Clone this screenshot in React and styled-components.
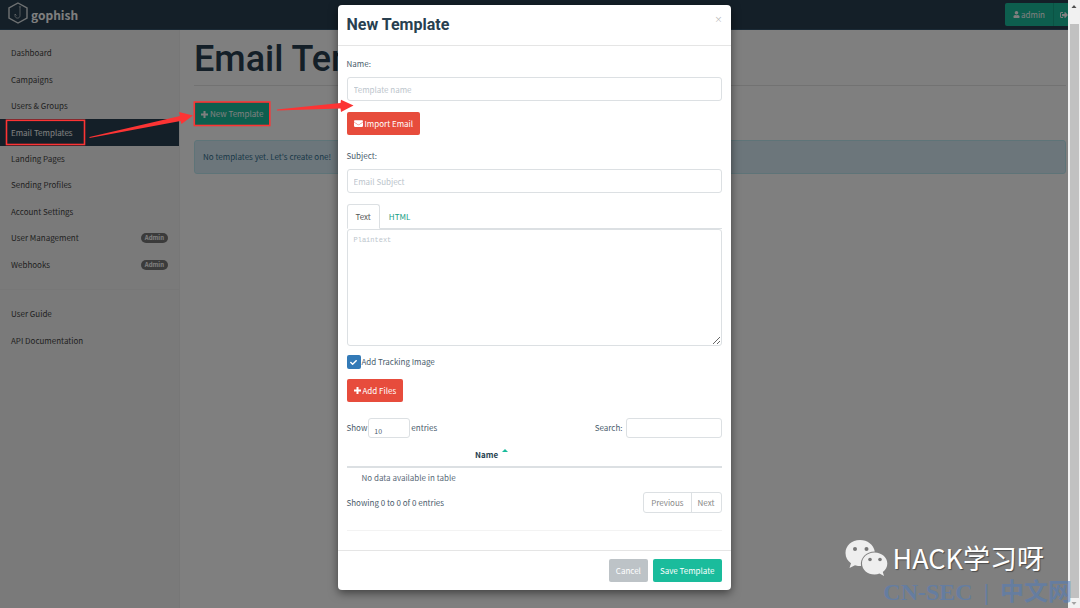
import React from "react";
import styled, { createGlobalStyle } from "styled-components";
import { FaPlus, FaEnvelope, FaUser, FaSignOutAlt, FaCheck } from "react-icons/fa";

const sans = '"Noto Sans CJK SC", "Noto Sans", sans-serif';
const heading = 'Roboto, "Liberation Sans", sans-serif';
const line = "#dce0e3";

const GlobalStyle = createGlobalStyle`
  *, *::before, *::after { box-sizing: border-box; }
  html, body { margin: 0; height: 100%; overflow: hidden; }
  #root { height: 100%; }
  body { font: 8px/12px ${sans}; color: #4a5c6c; background: #fff; }
  button, input, select, textarea { font: inherit; color: inherit; margin: 0; }
  h1, h2, p, ul { margin: 0; padding: 0; }
`;

const Window = styled.div`
  position: relative;
  display: flex;
  height: 100vh;
`;

const Viewport = styled.div`
  position: relative;
  flex: 1;
  min-width: 0;
  display: flex;
  flex-direction: column;
  overflow: hidden;
`;

const Header = styled.header`
  display: flex;
  align-items: center;
  justify-content: space-between;
  height: 30px;
  padding-left: 8px;
  background: #283f50;
  border-bottom: 1px solid #34526a;
`;

const Brand = styled.a`
  display: flex;
  align-items: center;
  gap: 3px;
  color: #fff;
  font-size: 12px;
  line-height: 16px;
  font-weight: 700;
  text-decoration: none;

  svg { flex: none; margin-top: -3px; }
`;

const HeaderButtons = styled.div`
  display: flex;
`;

const HeaderButton = styled.button`
  display: flex;
  align-items: center;
  gap: 1px;
  height: 23px;
  padding: 0 ${(p) => (p.$clipped ? 0 : 8)}px 0 ${(p) => (p.$clipped ? 6 : 8)}px;
  width: ${(p) => (p.$clipped ? "15px" : "auto")};
  overflow: hidden;
  border: 0;
  border-left: ${(p) => (p.$clipped ? "1px solid #17a689" : "0")};
  border-radius: ${(p) => (p.$clipped ? "0" : "2px 0 0 2px")};
  background: #1abc9c;
  color: #fff;

  svg { flex: none; }
`;

const Columns = styled.div`
  flex: 1;
  display: flex;
`;

const Sidebar = styled.nav`
  flex: none;
  width: 180px;
  padding-top: 10px;
  background: #f5f5f5;
  border-right: 1px solid #eee;
`;

const NavList = styled.ul`
  display: grid;
  grid-auto-rows: 1fr;
  height: ${(p) => p.$height}px;
  list-style: none;
`;

const NavLink = styled.a`
  display: flex;
  align-items: center;
  justify-content: space-between;
  height: 100%;
  padding: 0 11px;
  text-decoration: none;
  color: ${(p) => (p.$active ? "#fff" : "#444")};
  background: ${(p) => (p.$active ? "#283f50" : "transparent")};
`;

const Badge = styled.span`
  padding: 0 4px;
  border-radius: 6px;
  background: #777;
  color: #fff;
  font-size: 6px;
  line-height: 10px;
  font-weight: 700;
`;

const Divider = styled.hr`
  height: 1px;
  margin: ${(p) => p.$space}px 0;
  border: 0;
  background: #eee;
`;

const Main = styled.main`
  flex: 1;
  min-width: 0;
  padding: 9px 2px 0 14px;
`;

const PageTitle = styled.h1`
  padding-bottom: 6px;
  border-bottom: 1px solid #e4e4e4;
  font: 500 36px/40px ${heading};
  color: #283f50;
`;

const Button = styled.button`
  display: inline-flex;
  align-items: center;
  gap: 2px;
  height: ${(p) => p.$height || 23}px;
  padding: 0 7px;
  border: 0;
  border-radius: 2px;
  background: ${(p) => p.$color};
  color: #fff;
  white-space: nowrap;

  svg { flex: none; }
`;

const PageActions = styled.div`
  display: flex;
  padding: 16px 0 14px;
`;

const Notice = styled.div`
  padding: 10px 8px;
  border: 1px solid #bce8f1;
  border-radius: 3px;
  background: #d9edf7;
  color: #31708f;
`;

const Scrollbar = styled.div`
  flex: none;
  display: flex;
  flex-direction: column;
  align-items: center;
  justify-content: space-between;
  width: 12px;
  background: #f1f1f1;
`;

const ScrollThumb = styled.div`
  flex: 1;
  width: 9px;
  margin-top: 14px;
  background: #c1c1c1;
`;

const ScrollArrow = styled.svg`
  flex: none;
  width: 12px;
  height: 10px;
`;

const Backdrop = styled.div`
  position: absolute;
  inset: 0;
  display: flex;
  justify-content: center;
  align-items: flex-start;
  padding-top: 5px;
  background: rgba(0, 0, 0, 0.5);
`;

const Dialog = styled.div`
  width: 100%;
  max-width: 393px;
  border-radius: 4px;
  background: #fff;
  box-shadow: 0 3px 10px rgba(0, 0, 0, 0.5);
`;

const DialogHeader = styled.div`
  display: flex;
  justify-content: space-between;
  align-items: flex-start;
  padding: 8px 8px 8px 9px;
  border-bottom: 1px solid #e5e5e5;
`;

const DialogTitle = styled.h2`
  font: 700 16px/24px ${heading};
  color: #283f50;
`;

const CloseButton = styled.button`
  padding: 0;
  border: 0;
  background: none;
  color: #b5b5b5;
  font-size: 8px;
  line-height: 12px;
`;

const DialogBody = styled.div`
  padding: 11px 9px 19px;
`;

const Label = styled.label`
  display: block;
  line-height: 14px;
  margin-bottom: 6px;
`;

const TextInput = styled.input`
  display: block;
  width: 100%;
  height: 24px;
  padding: 0 6px;
  border: 1px solid ${line};
  border-radius: 3px;
  background: #fff;
  outline: 0;

  &::placeholder { color: #bcc5cc; opacity: 1; }
`;

const ButtonRow = styled.div`
  display: flex;
  padding: ${(p) => p.$top}px 0 14px;
`;

const Tabs = styled.div`
  display: flex;
  margin-top: 11px;
  border-bottom: 1px solid ${line};
`;

const Tab = styled.button`
  height: 25px;
  margin-bottom: -1px;
  padding: 0 8px;
  border: 1px solid ${(p) => (p.$active ? line : "transparent")};
  border-bottom-color: ${(p) => (p.$active ? "#fff" : "transparent")};
  border-radius: 3px 3px 0 0;
  background: ${(p) => (p.$active ? "#fff" : "transparent")};
  color: ${(p) => (p.$active ? "#555" : "#16a085")};
`;

const PlainText = styled.textarea`
  display: block;
  width: 100%;
  height: 117px;
  padding: 4px 6px;
  border: 1px solid ${line};
  border-radius: 3px;
  background: #fff;
  font: 7px/12px "Liberation Mono", monospace;
  resize: vertical;
  outline: 0;

  &::placeholder { color: #bcc5cc; opacity: 1; }
`;

const CheckLabel = styled.label`
  display: flex;
  align-items: center;
  gap: 1px;
  height: 14px;
  margin-top: 9px;
`;

const CheckBox = styled.span`
  display: grid;
  width: 14px;
  height: 14px;
  border-radius: 2px;
  background: #337ab7;
  color: #fff;

  > * { grid-area: 1 / 1; place-self: center; }
  input { appearance: none; width: 14px; height: 14px; }
  svg { pointer-events: none; }
`;

const TableControls = styled.div`
  display: flex;
  justify-content: space-between;
  margin-top: 2px;
`;

const InlineLabel = styled.label`
  display: flex;
  align-items: center;
  gap: ${(p) => p.$gap}px;
`;

const CountSelect = styled.select`
  appearance: none;
  width: 42px;
  height: 20px;
  padding: 5px 5px 0;
  border: 1px solid ${line};
  border-radius: 3px;
  background: #fff;
  font-size: 7px;
`;

const SearchInput = styled(TextInput)`
  width: 96px;
  height: 20px;
`;

const Table = styled.table`
  width: 100%;
  margin-top: 5px;
  border-collapse: collapse;

  th {
    height: 24px;
    padding: 0;
    border-bottom: 2px solid ${line};
    color: #283f50;
  }
  td {
    height: 20px;
    padding: 0 15px;
    color: #5a6a78;
  }
`;

const SortHead = styled.span`
  display: inline-flex;
  gap: 4px;
  align-items: flex-start;
  padding-left: 9px;
`;

const TableFooter = styled.div`
  display: flex;
  justify-content: space-between;
  align-items: center;
  margin-top: 5px;
`;

const Pager = styled.div`
  display: flex;
  border: 1px solid ${line};
  border-radius: 3px;
`;

const PageButton = styled.button`
  height: 19px;
  padding: 0 ${(p) => (p.$last ? 6 : 7)}px;
  border: 0;
  border-left: ${(p) => (p.$last ? `1px solid ${line}` : "0")};
  background: none;
  color: #888;
`;

const FaintRule = styled(Divider)`
  margin: 17px 0 0;
  background: #f3f3f3;
`;

const DialogFooter = styled.div`
  display: flex;
  justify-content: flex-end;
  gap: 5px;
  padding: 8px 9px;
  border-top: 1px solid #e5e5e5;
`;

const Annotations = styled.svg`
  position: absolute;
  left: 0;
  top: 0;
  width: 360px;
  height: 160px;
  pointer-events: none;
`;

const Watermark = styled.div`
  position: absolute;
  right: 36px;
  bottom: 30px;
  display: flex;
  align-items: center;
  gap: 5px;
  color: #fff;
  font: 400 27px/40px ${sans};
  text-shadow: 1px 1px 1px rgba(0, 0, 0, 0.4);
  pointer-events: none;
`;

const SiteMark = styled.div`
  position: absolute;
  right: 8px;
  bottom: 0;
  display: flex;
  gap: 11px;
  color: rgba(84, 124, 184, 0.6);
  font: 700 24px/32px "Liberation Serif", "Noto Sans CJK SC", serif;
  pointer-events: none;
`;

const mainLinks = [
  { label: "Dashboard" },
  { label: "Campaigns" },
  { label: "Users & Groups" },
  { label: "Email Templates", active: true },
  { label: "Landing Pages" },
  { label: "Sending Profiles" },
  { label: "Account Settings" },
  { label: "User Management", badge: "Admin" },
  { label: "Webhooks", badge: "Admin" },
];

const helpLinks = [{ label: "User Guide" }, { label: "API Documentation" }];

function NavItems({ items, height }) {
  return (
    <NavList $height={height}>
      {items.map((item) => (
        <li key={item.label}>
          <NavLink href="#" $active={item.active}>
            {item.label}
            {item.badge && <Badge>{item.badge}</Badge>}
          </NavLink>
        </li>
      ))}
    </NavList>
  );
}

function Logo() {
  return (
    <svg width="20" height="22" viewBox="0 0 20 22" fill="none" stroke="#dfe3e6">
      <path d="M10 1 L19 6 V16 L10 21 L1 16 V6 Z" strokeWidth="1.4" />
      <path d="M12 5.500 V13.500 C12 17 7 17 7 13.500 V12 L8.500 13.500" strokeWidth="0.7" />
      <circle cx="12" cy="4.800" r="0.700" strokeWidth="0.500" />
    </svg>
  );
}

function PlusIcon() {
  return (
    <svg width="7" height="7" viewBox="0 0 7 7" aria-hidden="true">
      <path d="M2.500 0 H4.500 V2.500 H7 V4.500 H4.500 V7 H2.500 V4.500 H0 V2.500 H2.500 Z" fill="currentColor" />
    </svg>
  );
}

function WeChatIcon() {
  return (
    <svg width="43" height="38" viewBox="0 0 43 38">
      <path
        fill="#eee"
        d="M15 1 C6.500 1 0.500 6.800 0.500 14 C0.500 18.500 2.700 22 6 24.300 L4.500 29 L10 26.200 C12 26.900 14 27 16 27 C15 19 21 12.500 29.800 12.500 C28.500 5.500 22.500 1 15 1 Z"
      />
      <path
        fill="#eee"
        d="M29.500 13.500 C22 13.500 17 18.500 17 24.500 C17 31 22.500 35.500 29.500 35.500 C31.300 35.500 33 35.200 34.500 34.600 L39 37 L37.800 33 C40.700 31 42.300 28 42.300 24.500 C42.300 18.500 37 13.500 29.500 13.500 Z"
      />
      <g fill="#777">
        <circle cx="10" cy="10" r="2" />
        <circle cx="21.500" cy="10" r="2" />
        <circle cx="25" cy="20.500" r="1.800" />
        <circle cx="35" cy="20.500" r="1.800" />
      </g>
    </svg>
  );
}

export default function App() {
  return (
    <Window>
      <GlobalStyle />
      <Viewport>
        <Header>
          <Brand href="#">
            <Logo />
            gophish
          </Brand>
          <HeaderButtons>
            <HeaderButton type="button">
              <FaUser size={7} />
              admin
            </HeaderButton>
            <HeaderButton type="button" $clipped aria-label="Sign out">
              <FaSignOutAlt size={8} />
            </HeaderButton>
          </HeaderButtons>
        </Header>
        <Columns>
          <Sidebar>
            <NavItems items={mainLinks} height={238} />
            <Divider $space={11} />
            <NavItems items={helpLinks} height={53} />
          </Sidebar>
          <Main>
            <PageTitle>Email Templates</PageTitle>
            <PageActions>
              <Button type="button" $color="#1abc9c" $height={24}>
                <PlusIcon />
                New Template
              </Button>
            </PageActions>
            <Notice>No templates yet. Let's create one!</Notice>
          </Main>
        </Columns>

        <Backdrop>
          <Dialog role="dialog" aria-labelledby="dialog-title">
            <DialogHeader>
              <DialogTitle id="dialog-title">New Template</DialogTitle>
              <CloseButton type="button" aria-label="Close">×</CloseButton>
            </DialogHeader>
            <DialogBody>
              <Label htmlFor="name">Name:</Label>
              <TextInput id="name" placeholder="Template name" />
              <ButtonRow $top={11}>
                <Button type="button" $color="#e74c3c">
                  <FaEnvelope size={9} />
                  Import Email
                </Button>
              </ButtonRow>
              <Label htmlFor="subject">Subject:</Label>
              <TextInput id="subject" placeholder="Email Subject" />
              <Tabs role="tablist">
                <Tab type="button" role="tab" aria-selected="true" $active>Text</Tab>
                <Tab type="button" role="tab" aria-selected="false">HTML</Tab>
              </Tabs>
              <PlainText aria-label="Plaintext" placeholder="Plaintext" />
              <CheckLabel>
                <CheckBox>
                  <input type="checkbox" defaultChecked />
                  <FaCheck size={7} />
                </CheckBox>
                Add Tracking Image
              </CheckLabel>
              <ButtonRow $top={10}>
                <Button type="button" $color="#e74c3c">
                  <PlusIcon />
                  Add Files
                </Button>
              </ButtonRow>
              <TableControls>
                <InlineLabel $gap={1}>
                  Show
                  <CountSelect defaultValue="10">
                    <option>10</option>
                    <option>25</option>
                  </CountSelect>
                  entries
                </InlineLabel>
                <InlineLabel $gap={3}>
                  Search:
                  <SearchInput type="search" />
                </InlineLabel>
              </TableControls>
              <Table>
                <colgroup>
                  <col width="75%" />
                  <col width="25%" />
                </colgroup>
                <thead>
                  <tr>
                    <th scope="col">
                      <SortHead>
                        Name
                        <svg width="6" height="3" viewBox="0 0 6 3" aria-hidden="true">
                          <path d="M0 3 L3 0 L6 3 Z" fill="#1abc9c" />
                        </svg>
                      </SortHead>
                    </th>
                    <th />
                  </tr>
                </thead>
                <tbody>
                  <tr>
                    <td colSpan={2}>No data available in table</td>
                  </tr>
                </tbody>
              </Table>
              <TableFooter>
                <p>Showing 0 to 0 of 0 entries</p>
                <Pager>
                  <PageButton type="button">Previous</PageButton>
                  <PageButton type="button" $last>Next</PageButton>
                </Pager>
              </TableFooter>
              <FaintRule />
            </DialogBody>
            <DialogFooter>
              <Button type="button" $color="#bdc3c7">Cancel</Button>
              <Button type="button" $color="#1abc9c">Save Template</Button>
            </DialogFooter>
          </Dialog>
        </Backdrop>
      </Viewport>

      <Scrollbar>
        <ScrollArrow viewBox="0 0 12 10">
          <path d="M3.500 8 L6 5 L8.500 8 Z" fill="#505050" />
        </ScrollArrow>
        <ScrollThumb />
        <ScrollArrow viewBox="0 0 12 10">
          <path d="M3.500 4 L6 7 L8.500 4 Z" fill="#a3a3a3" />
        </ScrollArrow>
      </Scrollbar>

      <Annotations viewBox="0 0 360 160" aria-hidden="true">
        <g fill="none" stroke="#fc3434" strokeWidth="1.600">
          <rect x="6.500" y="120.300" width="78" height="24.200" />
          <rect x="194.300" y="102" width="75.500" height="23.500" />
        </g>
        <g fill="#fc3434">
          <path d="M89.500 137 L89.500 138 L180.500 121 L181.500 124 L193 115.500 L179 112 L180 116 Z" />
          <path d="M277 109.500 L277 110.500 L340.500 108.500 L341 112 L353.500 105.500 L341 99.800 L340.500 103 Z" />
        </g>
      </Annotations>

      <Watermark>
        <WeChatIcon />
        HACK学习呀
      </Watermark>
      <SiteMark>
        <span>CN-SEC</span>
        <span>|</span>
        <span>中文网</span>
      </SiteMark>
    </Window>
  );
}
